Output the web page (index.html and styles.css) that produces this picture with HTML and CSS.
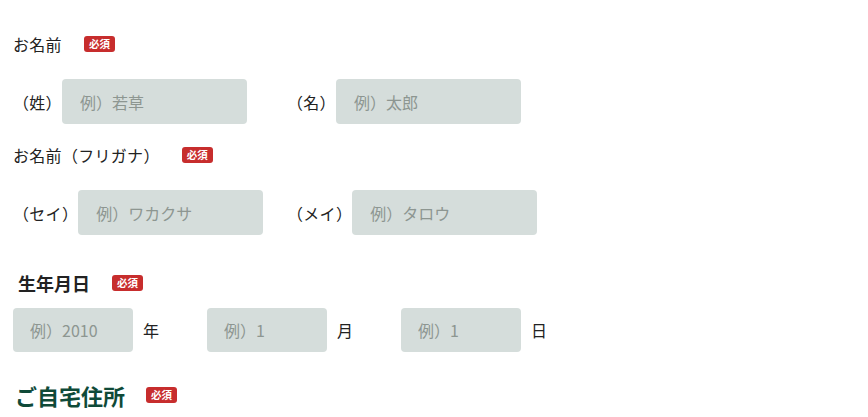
FILE: index.html
```html
<!DOCTYPE html>
<html lang="ja">
<head>
    <meta charset="UTF-8">
    <link rel="stylesheet" href="styles.css">
</head>
<body>

<form class="entry-form">
    <div class="field">
        <div class="field-label">お名前<span class="required">必須</span></div>
        <div class="name-row">
            <label class="name-item"><span class="item-label">（姓）</span><input type="text" placeholder="例）若草"></label>
            <label class="name-item"><span class="item-label">（名）</span><input type="text" placeholder="例）太郎"></label>
        </div>
    </div>

    <div class="field">
        <div class="field-label">お名前（フリガナ）<span class="required">必須</span></div>
        <div class="name-row">
            <label class="name-item"><span class="item-label">（セイ）</span><input type="text" placeholder="例）ワカクサ"></label>
            <label class="name-item"><span class="item-label">（メイ）</span><input type="text" placeholder="例）タロウ"></label>
        </div>
    </div>

    <div class="field field-birth">
        <div class="field-label field-label-bold">生年月日<span class="required">必須</span></div>
        <div class="date-row">
            <label class="date-item"><input type="text" placeholder="例）2010"><span class="date-unit">年</span></label>
            <label class="date-item"><input type="text" placeholder="例）1"><span class="date-unit">月</span></label>
            <label class="date-item"><input type="text" placeholder="例）1"><span class="date-unit">日</span></label>
        </div>
    </div>

    <h2 class="section-title">ご自宅住所<span class="required">必須</span></h2>
</form>

</body>
</html>
```

FILE: styles.css
```css
body {
    margin: 0;
    padding: 32px 13px 0;
    font-family: "Noto Sans CJK JP", "Noto Sans", sans-serif;
    color: #222;
    background: #fff;
}
.field {
    margin-bottom: 19px;
}
.field-label {
    display: flex;
    align-items: center;
    font-size: 16px;
    line-height: 24px;
    letter-spacing: 0.3px;
    margin-bottom: 23px;
}
.required {
    display: inline-block;
    margin-left: 22px;
    padding: 0 5px;
    height: 16px;
    line-height: 16px;
    font-size: 10.5px;
    font-weight: bold;
    letter-spacing: 0;
    color: #fff;
    background: #c72d2d;
    border-radius: 3px;
}
.name-row {
    display: grid;
    grid-template-columns: 274px 274px;
}
.name-item {
    display: flex;
    align-items: center;
}
.item-label {
    font-size: 16px;
    letter-spacing: 0.3px;
}
input {
    box-sizing: border-box;
    height: 45px;
    width: 185px;
    padding: 0 18px;
    border: none;
    border-radius: 4px;
    background: #d5dddb;
    font-family: inherit;
    font-size: 16px;
    color: #222;
}
input::placeholder {
    color: #8d9691;
}
.field-birth {
    margin-top: 35px;
    margin-bottom: 28px;
}
.field-label-bold {
    font-size: 18px;
    font-weight: bold;
    line-height: 26px;
    letter-spacing: 0;
    padding-left: 5px;
    margin-bottom: 12px;
}
.date-row {
    display: grid;
    grid-template-columns: repeat(3, 194px);
}
.date-item {
    display: flex;
    align-items: center;
}
.date-item input {
    width: 120px;
    height: 44px;
    padding: 0 17px;
}
.date-unit {
    margin-left: 10px;
    font-size: 16px;
}
.section-title {
    display: flex;
    align-items: center;
    margin: 0;
    padding-left: 2px;
    font-size: 22px;
    line-height: 30px;
    font-weight: bold;
    color: #0f4a38;
}
.section-title .required {
    margin-left: 21px;
}
```
